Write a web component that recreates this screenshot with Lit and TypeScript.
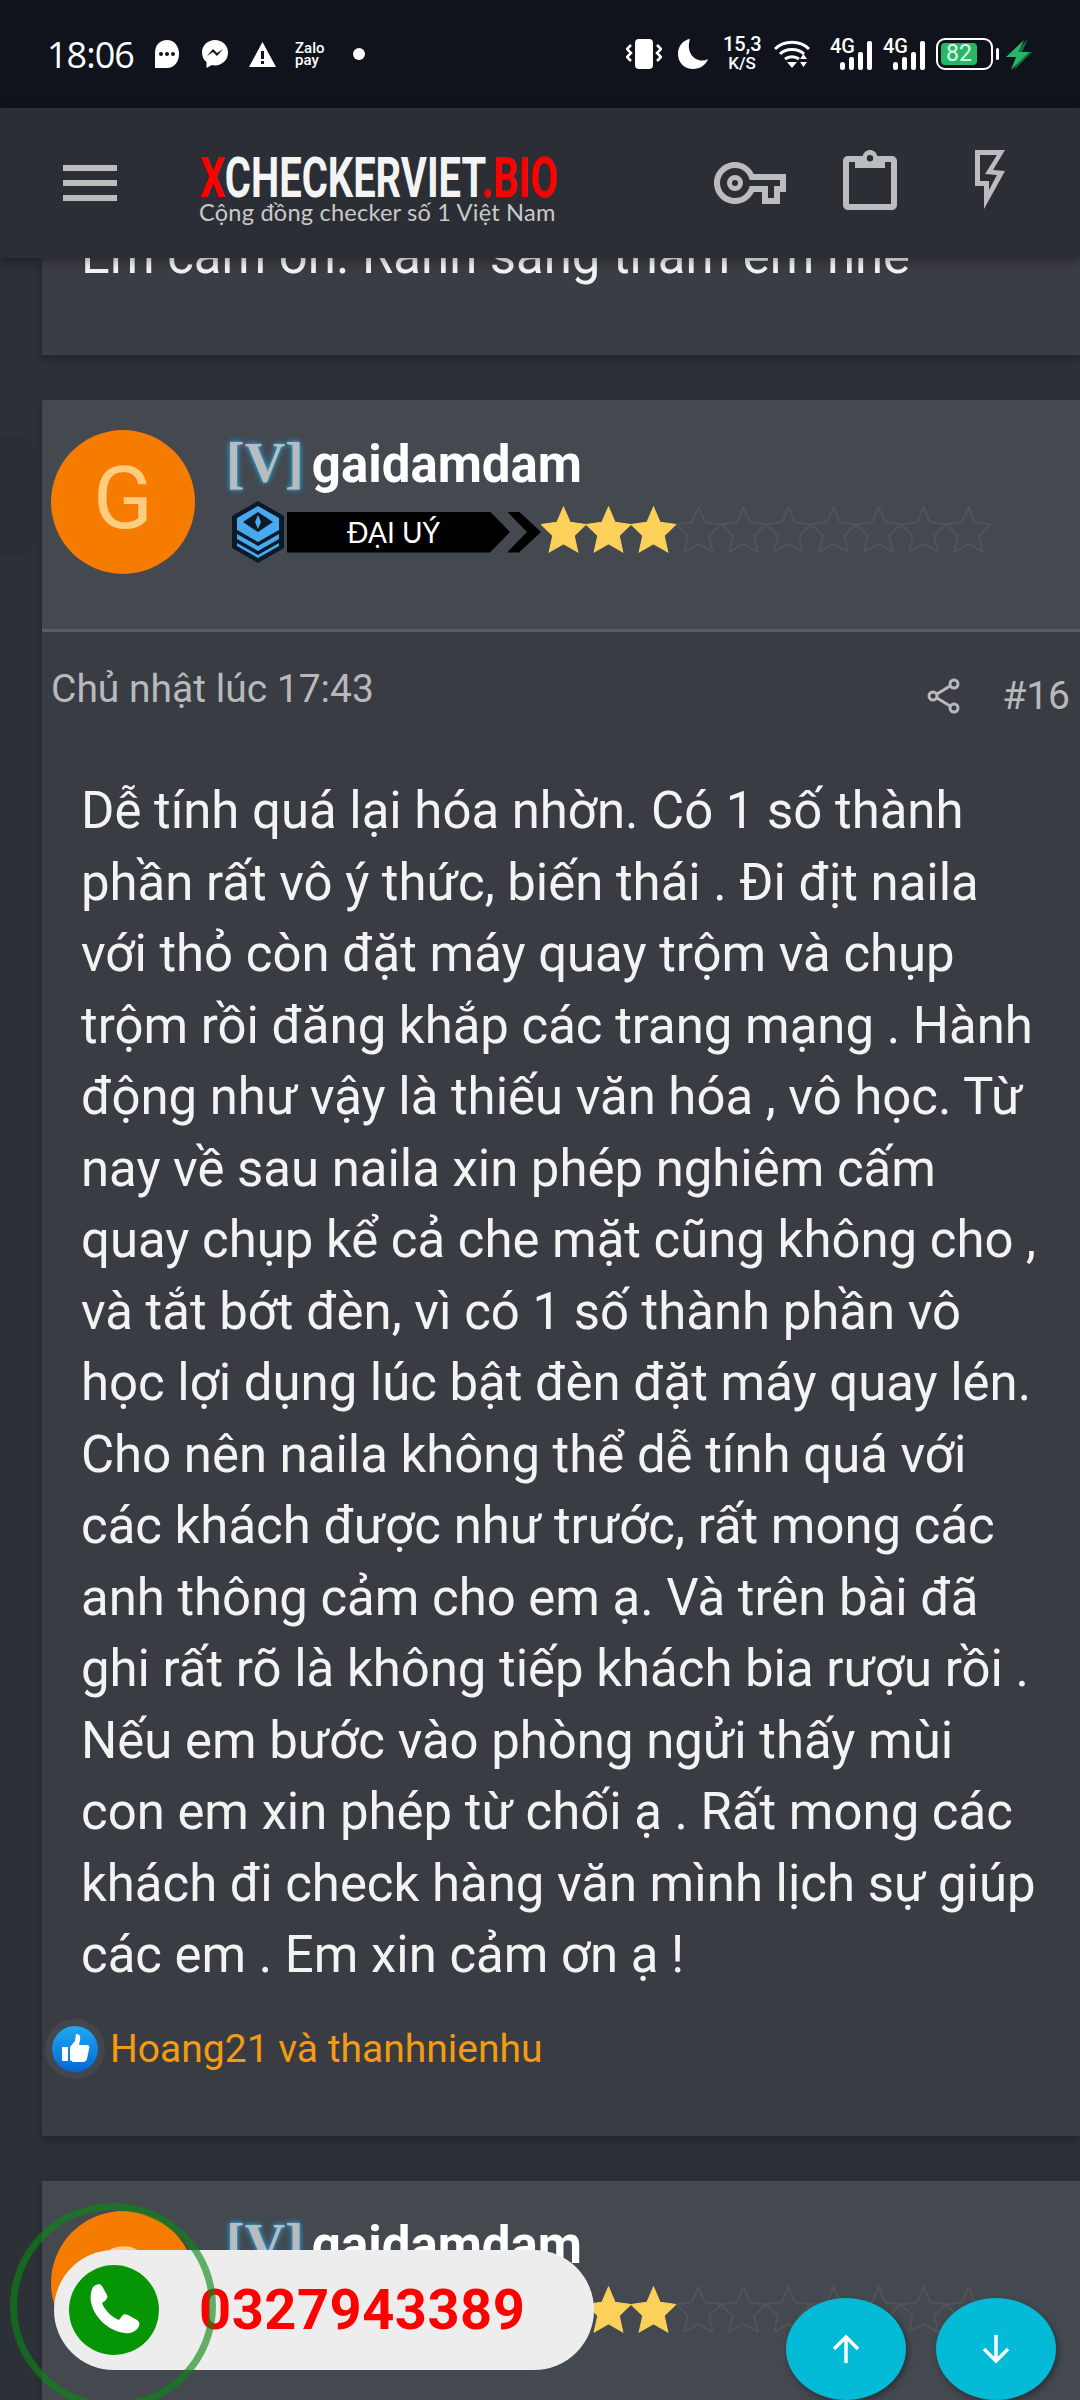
import { LitElement, html, css } from "lit";
import { customElement } from "lit/decorators.js";

const LINES = [
  "Dễ tính quá lại hóa nhờn. Có 1 số thành",
  "phần rất vô ý thức, biến thái . Đi địt naila",
  "với thỏ còn đặt máy quay trộm và chụp",
  "trộm rồi đăng khắp các trang mạng . Hành",
  "động như vậy là thiếu văn hóa , vô học. Từ",
  "nay về sau naila xin phép nghiêm cấm",
  "quay chụp kể cả che mặt cũng không cho ,",
  "và tắt bớt đèn, vì có 1 số thành phần vô",
  "học lợi dụng lúc bật đèn đặt máy quay lén.",
  "Cho nên naila không thể dễ tính quá với",
  "các khách được như trước, rất mong các",
  "anh thông cảm cho em ạ. Và trên bài đã",
  "ghi rất rõ là không tiếp khách bia rượu rồi .",
  "Nếu em bước vào phòng ngửi thấy mùi",
  "con em xin phép từ chối ạ . Rất mong các",
  "khách đi check hàng văn mình lịch sự giúp",
  "các em . Em xin cảm ơn ạ !",
];

const STAR = "M22 1l6.500 15L44 18 32.500 29 36 45 22 37 8 45 11.500 29 0 18l15.500-2z";

const stars = () => html`<div class="stars">
  ${[0, 1, 2, 3, 4, 5, 6, 7, 8, 9].map(
    (i) => html`<svg class="star" viewBox="0 0 44 46">
      <path d=${STAR} fill=${i < 3 ? "#fdd05a" : "none"} stroke=${i < 3 ? "#fdd05a" : "#505359"} stroke-width=${i < 3 ? 1 : 2}></path>
    </svg>`
  )}
</div>`;

const rankIcon = html`<svg class="rank" viewBox="0 0 54 62">
  <path d="M27 0L53 15V47L27 62L1 47V15Z" fill="#0b1a28"></path>
  <path d="M27 5L48 17V29L27 41L6 29V17Z" fill="#4aa8ee"></path>
  <path d="M27 11L42 21L27 31L12 21Z" fill="#0b1a28"></path>
  <path d="M27 14L30 21L27 28L24 21Z" fill="#4aa8ee"></path>
  <path d="M6 33L27 45L48 33V38L27 50L6 38Z" fill="#4aa8ee"></path>
  <path d="M6 42L27 54L48 42V45L27 57L6 45Z" fill="#4aa8ee"></path>
</svg>`;

const signal = html`<svg viewBox="0 0 42 32"><rect x="10" y="24" width="5" height="8" rx="2.500" fill="#fff"></rect><rect x="19" y="19" width="5" height="13" rx="2" fill="#fff"></rect><rect x="28" y="14" width="5" height="18" rx="2" fill="#fff"></rect><rect x="37" y="3" width="5" height="29" rx="2" fill="#fff"></rect></svg>`;

const postHead = html`<div class="head">
  <div class="avatar">G</div>
  <div class="who">
    <div class="name"><span class="tag">[V]</span><span>gaidamdam</span></div>
    <div class="rankrow">
      ${rankIcon}
      <div class="ribbon"><span>ĐẠI UÝ</span></div>
      <div class="chev"></div>
      ${stars()}
    </div>
  </div>
</div>`;

@customElement("app-root")
export class AppRoot extends LitElement {
  static styles = css`
    :host { display: block; width: 1080px; height: 2400px; overflow: hidden; position: relative; background: #2c3037; font-family: Roboto, "Noto Sans", sans-serif; }
    .status { height: 108px; background: #10131c; display: flex; align-items: center; justify-content: space-between; padding: 0 48px 0 47px; box-sizing: border-box; color: #fff; }
    .sl, .sr { display: flex; align-items: center; }
    .time { font-size: 36px; font-weight: 400; font-family: "Open Sans", Roboto, sans-serif; letter-spacing: -1px; width: 107px; }
    .i-msg { margin-left: 21px; }
    .i-warn { margin-left: 19px; }
    .zalo { font-size: 15px; line-height: 12px; font-weight: 500; width: 58px; margin-left: 18px; }
    .speed { font-size: 20px; font-weight: 500; line-height: 19px; text-align: center; width: 38px; margin: 0 13px 0 15px; }
    .speed small { font-size: 17px; display: block; }
    .i-vib { margin-right: 16px; }
    .i-wifi { margin-right: 20px; }
    .gl { position: relative; width: 42px; height: 32px; margin-right: 11px; }
    .gl span { position: absolute; left: 0; top: -3px; font-size: 20px; line-height: 22px; font-weight: 500; }
    .gl svg { position: absolute; inset: 0; }
    .batt { width: 57px; height: 32px; box-sizing: border-box; border: 2px solid #fff; border-radius: 9px; padding: 3px 14px 3px 3px; margin-right: 3px; display: flex; }
    .batt span { flex: 1; background: #27b865; border-radius: 4px; color: #e4f5ea; font-size: 23px; line-height: 22px; text-align: center; }
    .tip { width: 3px; height: 12px; background: #fff; border-radius: 2px; margin-right: 6px; }

    .bar { height: 150px; background: #2b2f35; box-shadow: 0 3px 10px rgba(0, 0, 0, 0.35); position: relative; z-index: 2; display: flex; align-items: center; padding: 0 75px 0 63px; }
    .menu { width: 54px; height: 36px; display: flex; flex-direction: column; justify-content: space-between; margin-right: 83px; flex: none; }
    .menu i { display: block; height: 6px; background: #bbbcbe; }
    .logo { width: 358px; margin-top: 13px; flex: none; }
    .logo-t { font-size: 56px; line-height: 44px; font-weight: 700; color: #f4f4f4; transform: scaleX(0.713); transform-origin: left center; white-space: nowrap; }
    .logo-t b { color: #f00; font-weight: 700; }
    .logo-s { font-family: Lato, sans-serif; font-size: 23.600px; line-height: 24px; color: #c9c9ca; white-space: nowrap; margin-left: -1px; letter-spacing: 0.2px; }
    .ic1 { width: 72px; height: 42px; margin-left: auto; margin-right: 57px; flex: none; }
    .ic2 { width: 54px; height: 60px; margin-right: 78px; margin-top: -6px; flex: none; }
    .ic3 { width: 30px; height: 60px; margin-top: -6px; flex: none; }

    main { display: flex; flex-direction: column; margin-left: 42px; }
    .frag { height: 97px; background: #3a3d43; box-shadow: 0 4px 8px rgba(0, 0, 0, 0.22); overflow: hidden; position: relative; }
    .frag p { margin: -38px 0 0 39px; }
    .post { background: #393c43; box-shadow: 0 4px 8px rgba(0, 0, 0, 0.22); margin-top: 45px; }
    .post.second { height: 500px; }
    .head { height: 232px; box-sizing: border-box; background: #44484f; border-bottom: 3px solid #5a5d64; padding: 30px 0 0 9px; display: flex; }
    .post.second .head { border-bottom: 0; }
    .avatar { width: 144px; height: 144px; border-radius: 50%; background: #f57c00; color: #ffcc80; font-size: 88px; line-height: 136px; text-align: center; font-weight: 400; flex: none; }
    .who { margin-left: 29px; }
    .name { display: flex; align-items: baseline; height: 66px; gap: 8px; font-size: 51px; line-height: 66px; font-weight: 700; color: #fff; }
    .tag { font-family: "Liberation Serif", serif; font-size: 56px; font-weight: 700; color: #b9bcbf; text-shadow: 0 0 6px #2aa5dc, 0 0 3px #2aa5dc; margin-left: 2px; }
    .rankrow { display: flex; align-items: center; height: 62px; margin-top: 5px; margin-left: 7px; }
    .rank { width: 54px; height: 62px; flex: none; }
    .ribbon { width: 223px; height: 41px; margin-left: 2px; background: #000; clip-path: polygon(0 0, 203px 0, 100% 50%, 203px 100%, 0 100%); color: #fff; font-family: Lato, sans-serif; font-size: 28px; line-height: 41px; text-align: center; padding-right: 10px; box-sizing: border-box; flex: none; }
    .chev { width: 34px; height: 41px; margin-left: -3px; background: #000; clip-path: polygon(0 0, 12px 0, 100% 50%, 12px 100%, 0 100%, 20px 50%); flex: none; }
    .stars { display: flex; }
    .star { width: 45px; height: 47px; flex: none; margin-top: -6px; }
    .meta { display: flex; justify-content: space-between; align-items: flex-start; padding: 35px 10px 0 9px; color: #b8b9bc; font-size: 39px; line-height: 44px; }
    .meta-r { display: flex; align-items: center; margin-top: 7px; }
    .share { width: 34px; height: 36px; margin-right: 41px; }
    .text { margin: 57px 0 0 39px; }
    p { font-size: 50.900px; line-height: 71.500px; color: #f3f3f4; white-space: nowrap; margin: 0; }
    .likes { display: flex; align-items: center; margin: 28px 0 0 3px; color: #f39c12; font-size: 39px; line-height: 60px; height: 117px; padding-bottom: 57px; box-sizing: border-box; }
    .like { width: 60px; height: 60px; margin-right: 5px; flex: none; }

    .dim { position: absolute; left: 0; top: 437px; width: 33px; height: 117px; border-radius: 0 10px 10px 0; background: rgba(0, 0, 0, 0.05); }
    .phone { position: absolute; left: 54px; top: 2250px; width: 540px; height: 120px; border-radius: 60px; background: #ededed; display: flex; align-items: center; z-index: 3; }
    .ph { width: 90px; height: 90px; margin-left: 15px; flex: none; }
    .num { margin-left: 40px; color: #f00; font-weight: 700; font-size: 56px; letter-spacing: 0.5px; }
    .ring { position: absolute; left: 10px; top: 2203px; width: 206px; height: 206px; box-sizing: border-box; border: 7px solid rgba(10, 135, 20, 0.62); border-radius: 50%; z-index: 4; }
    .fab { position: absolute; top: 2298px; width: 120px; height: 102px; border-radius: 50%; background: #03bbd6; box-shadow: 2px 3px 6px rgba(0, 0, 0, 0.35); z-index: 3; display: flex; justify-content: center; padding-top: 36px; box-sizing: border-box; }
    .fab svg { width: 28px; height: 30px; }
    .up { left: 786px; }
    .down { left: 936px; }
  `;

  render() {
    return html`
      <div class="status">
        <div class="sl">
          <span class="time">18:06</span>
          <svg width="26" height="28" viewBox="0 0 24 28"><path d="M12 0C5 0 0 5 0 13v15h12c7 0 12-6 12-14S19 0 12 0z" fill="#fff"></path><circle cx="6" cy="14" r="2" fill="#10131c"></circle><circle cx="12" cy="14" r="2" fill="#10131c"></circle><circle cx="18" cy="14" r="2" fill="#10131c"></circle></svg>
          <svg class="i-msg" width="28" height="28" viewBox="0 0 26 28"><path d="M13 0C6 0 0 5 0 12.500c0 4 1.700 7.300 4.500 9.500V28l5.300-3c1 .3 2.100.4 3.200.4 7 0 13-5.400 13-12.900S20 0 13 0z" fill="#fff"></path><path d="M5 16l6-7 4 4 6-4-6 7-4-4z" fill="#10131c"></path></svg>
          <svg class="i-warn" width="29" height="25" viewBox="0 0 27 25"><path d="M13.500 0L27 25H0z" fill="#fff"></path><path d="M12 9h3v8h-3zM12 19h3v3h-3z" fill="#10131c"></path></svg>
          <span class="zalo">Zalo<br />pay</span>
          <svg width="12" height="12" viewBox="0 0 12 12"><circle cx="6" cy="6" r="6" fill="#fff"></circle></svg>
        </div>
        <div class="sr">
          <svg class="i-vib" width="36" height="30" viewBox="0 0 36 30"><rect x="9" y="0" width="18" height="30" rx="4" fill="#fff"></rect><path d="M5 6L1 10l4 4-4 4 4 4M31 6l4 4-4 4 4 4-4 4" fill="none" stroke="#fff" stroke-width="2.500"></path></svg>
          <svg width="30" height="30" viewBox="0 0 30 30"><path d="M12 0C5 1 0 7 0 15c0 9 7 15 15 15 7 0 13-4 15-10-2 1-4 1.500-6 1.500C15 21.500 8 12 12 0z" fill="#fff"></path></svg>
          <div class="speed">15,3<small>K/S</small></div>
          <svg class="i-wifi" width="36" height="28" viewBox="0 0 36 28"><path d="M1 9C10 0 26 0 35 9M6 14c6-6 18-6 24 0M11 19c4-3 10-3 14 0" fill="none" stroke="#fff" stroke-width="3"></path><path d="M13 22h10l-5 6zM26 19h7l-3.500-5zM26 22h7l-3.500 5z" fill="#fff"></path></svg>
          <div class="gl"><span>4G</span>${signal}</div>
          <div class="gl"><span>4G</span>${signal}</div>
          <div class="batt"><span>82</span></div>
          <div class="tip"></div>
          <svg width="27" height="31" viewBox="0 0 27 31"><path d="M23 0L6 17h9L9 31l18-18H17z" fill="#1c6a42"></path><path d="M19 1L1 18h10L6 31l18-18H13z" fill="#27b865"></path></svg>
        </div>
      </div>

      <header class="bar">
        <div class="menu"><i></i><i></i><i></i></div>
        <div class="logo">
          <div class="logo-t"><b>X</b>CHECKERVIET<b>.BIO</b></div>
          <div class="logo-s">Cộng đồng checker số 1 Việt Nam</div>
        </div>
        <svg class="ic1" viewBox="0 0 72 42"><path fill-rule="evenodd" fill="#bbbcbe" d="M21 0c8.500 0 15.500 5 18.800 12H72v18h-6v12H48V30h-8.200C36.500 37 29.500 42 21 42 9.400 42 0 32.600 0 21S9.400 0 21 0zm0 6C12.700 6 6 12.700 6 21s6.700 15 15 15c7 0 13-4.500 14.600-12H54v12h6V24h6v-6H35.600C34 10.500 28 6 21 6z"></path><path fill-rule="evenodd" fill="#bbbcbe" d="M21 13a8 8 0 1 1 0 16 8 8 0 0 1 0-16zm0 5a3 3 0 1 0 0 6 3 3 0 0 0 0-6z"></path></svg>
        <svg class="ic2" viewBox="0 0 54 60"><path fill="#bbbcbe" fill-rule="evenodd" d="M27 0c3.400 0 6.300 2.200 7.400 6H49c2.800 0 5 2.200 5 5v44c0 2.800-2.200 5-5 5H5c-2.800 0-5-2.200-5-5V11c0-2.800 2.200-5 5-5h14.600C20.700 2.200 23.600 0 27 0zm0 5a3.200 3.200 0 1 0 0 6.400A3.200 3.200 0 0 0 27 5zM6 12v42h42V12h-6v6H12v-6z"></path></svg>
        <svg class="ic3" viewBox="0 0 30 60"><path fill="#bbbcbe" fill-rule="evenodd" d="M0 0h30L18 20l12 1L9 59V36H0zM5 5v26h9v9l8-15-12-1L22 5z"></path></svg>
      </header>

      <main>
        <div class="frag"><p>Em cảm ơn. Rảnh sáng thăm em nhé</p></div>
        <article class="post">
          ${postHead}
          <div class="meta">
            <span>Chủ nhật lúc 17:43</span>
            <div class="meta-r">
              <svg class="share" viewBox="0 0 34 36"><circle cx="27" cy="6" r="4" fill="none" stroke="#b8b9bc" stroke-width="3"></circle><circle cx="6" cy="18" r="4" fill="none" stroke="#b8b9bc" stroke-width="3"></circle><circle cx="27" cy="30" r="4" fill="none" stroke="#b8b9bc" stroke-width="3"></circle><path d="M10 16L23 8M10 20l13 8" stroke="#b8b9bc" stroke-width="3"></path></svg>
              <span>#16</span>
            </div>
          </div>
          <div class="text">${LINES.map((l) => html`<p>${l}</p>`)}</div>
          <div class="likes">
            <svg class="like" viewBox="0 0 60 60">
              <defs><linearGradient id="lg" x1="0" y1="0" x2="0" y2="1"><stop offset="0" stop-color="#20a8f0"></stop><stop offset="1" stop-color="#0268d8"></stop></linearGradient></defs>
              <circle cx="30" cy="30" r="30" fill="#42464d"></circle>
              <circle cx="30" cy="30" r="23" fill="url(#lg)"></circle>
              <path d="M17 28h6v14h-6zM25 28l5-6 1-7c3 0 5 2 4 6l-1 5h8c2 0 3 2 2 4l-2 10c-1 2-2 3-4 3H28l-3-2z" fill="#fff"></path>
            </svg>
            <span>Hoang21 và thanhnienhu</span>
          </div>
        </article>
        <article class="post second">${postHead}</article>
      </main>

      <div class="dim"></div>
      <div class="phone">
        <svg class="ph" viewBox="0 0 90 90"><circle cx="45" cy="45" r="45" fill="#059505"></circle><path d="M24 22c3-3 7-4 9-1l5 9c1 2 0 4-2 6l-3 2c3 8 10 14 17 17l3-4c1-2 4-2 6-1l9 5c3 2 3 5 1 8-3 4-8 6-14 5-17-3-30-16-33-31-1-6 0-11 2-15z" fill="#fff"></path></svg>
        <span class="num">0327943389</span>
      </div>
      <div class="ring"></div>
      <div class="fab up"><svg viewBox="0 0 28 30"><path d="M14 29V3M2 15L14 3l12 12" fill="none" stroke="#fff" stroke-width="3.500"></path></svg></div>
      <div class="fab down"><svg viewBox="0 0 28 30"><path d="M14 1v26M2 15l12 12 12-12" fill="none" stroke="#fff" stroke-width="3.500"></path></svg></div>
    `;
  }
}
